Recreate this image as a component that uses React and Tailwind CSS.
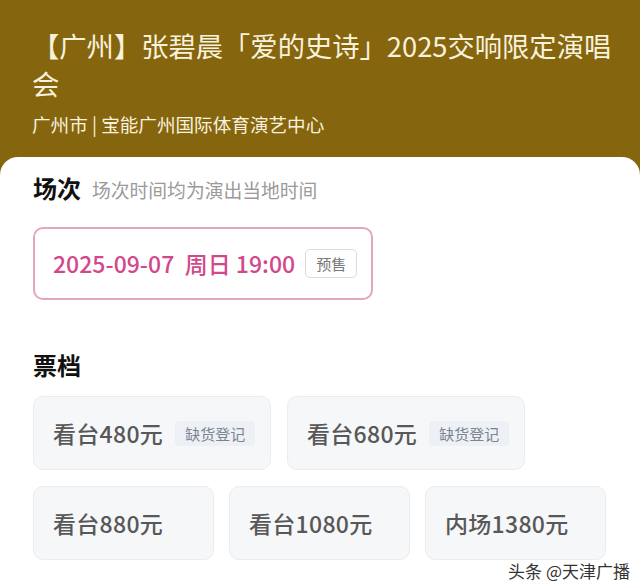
const font = { fontFamily: '"Noto Sans CJK SC", "Noto Sans", sans-serif' };

function Tier({ name, width, soldOut }) {
  return (
    <div
      className={`flex h-[74px] items-center gap-[12px] rounded-[10px] border border-[#ebecef] bg-[#f6f7f9] pl-[19px] ${width}`}
    >
      <span className="text-[23px] font-medium leading-none tracking-[0.3px] text-[#585858]">{name}</span>
      {soldOut && (
        <span className="rounded-[4px] bg-[#edf0f4] px-[10px] py-[4px] text-[15px] leading-[17px] text-[#7a8494]">
          缺货登记
        </span>
      )}
    </div>
  );
}

export default function App() {
  return (
    <div className="relative min-h-[586px] w-[640px] bg-[#86650f]" style={font}>
      <header className="pb-[21px] pl-[32px] pr-[16px] pt-[26px] text-[#f8f1dc]">
        <h1 className="text-[27.3px] leading-[38px]">【广州】张碧晨「爱的史诗」2025交响限定演唱会</h1>
        <p className="mt-[10px] text-[18.6px] leading-[24px]">广州市 | 宝能广州国际体育演艺中心</p>
      </header>

      <main className="min-h-[429px] rounded-t-[18px] bg-white px-[33px] pb-[30px] pt-[15px]">
        <div className="flex items-baseline gap-[11px]">
          <h2 className="text-[24px] font-bold leading-[32px] text-[#111]">场次</h2>
          <span className="text-[18.8px] text-[#9a9a9a]">场次时间均为演出当地时间</span>
        </div>

        <div className="mt-[23px] flex h-[73px] w-[340px] items-center rounded-[10px] border-2 border-[#e2a6c0] pl-[18px]">
          <span className="whitespace-pre text-[23px] font-medium leading-none text-[#d2488a]">
            2025-09-07  周日 19:00
          </span>
          <span className="ml-[10px] rounded-[5px] border border-[#dcdcdc] px-[10px] py-[4px] text-[15px] leading-[19px] text-[#777]">
            预售
          </span>
        </div>

        <h2 className="mt-[49px] text-[24px] font-bold leading-[32px] text-[#111]">票档</h2>

        <div className="mt-[15px] flex gap-[16px]">
          <Tier name="看台480元" width="w-[238px]" soldOut />
          <Tier name="看台680元" width="w-[238px]" soldOut />
        </div>
        <div className="mt-[16px] flex gap-[15px]">
          <Tier name="看台880元" width="w-[181px]" />
          <Tier name="看台1080元" width="w-[181px]" />
          <Tier name="内场1380元" width="w-[181px]" />
        </div>
      </main>

      <div className="absolute bottom-[8px] right-[10px] text-[17px] leading-[22px] text-[#333]">
        头条 @天津广播
      </div>
    </div>
  );
}
